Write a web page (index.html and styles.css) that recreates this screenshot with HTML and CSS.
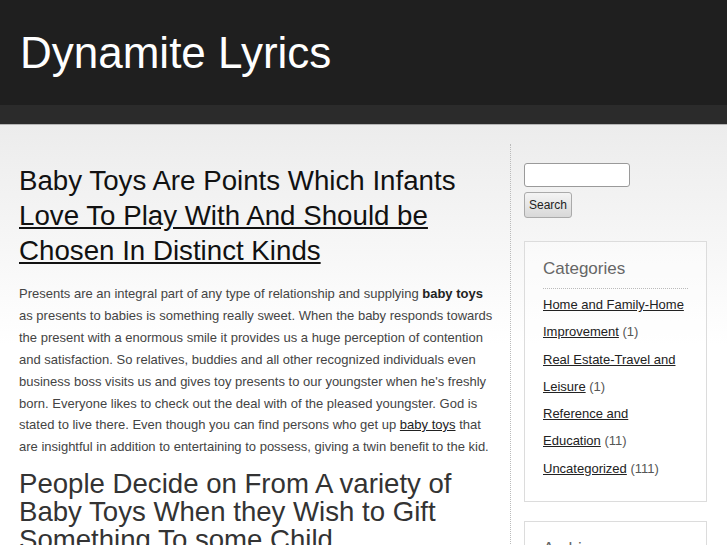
FILE: index.html
```html
<!DOCTYPE html>
<html lang="en">
<head>
    <meta charset="UTF-8">
    <title>Dynamite Lyrics</title>
    <link rel="stylesheet" href="styles.css">
</head>
<body>
    <header class="site-header">
        <h1 class="site-title">Dynamite Lyrics</h1>
    </header>
    <div class="nav-strip"></div>

    <div class="wrapper">
        <main class="content">
            <h2 class="post-title">Baby Toys Are Points Which Infants <a href="#">Love To Play With And Should be Chosen In Distinct Kinds</a></h2>
            <p class="post-text">Presents are an integral part of any type of relationship and supplying <strong>baby toys</strong> as presents to babies is something really sweet. When the baby responds towards the present with a enormous smile it provides us a huge perception of contention and satisfaction. So relatives, buddies and all other recognized individuals even business boss visits us and gives toy presents to our youngster when he's freshly born. Everyone likes to check out the deal with of the pleased youngster. God is stated to live there. Even though you can find persons who get up <a href="#">baby toys</a> that are insightful in addition to entertaining to possess, giving a twin benefit to the kid.</p>
            <h3 class="sub-title">People Decide on From A variety of Baby Toys When they Wish to Gift Something To some Child</h3>
        </main>

        <aside class="sidebar">
            <form class="search-form">
                <input type="text" class="search-input">
                <button type="button" class="search-btn">Search</button>
            </form>

            <div class="widget">
                <h4 class="widget-title">Categories</h4>
                <ul class="cat-list">
                    <li><a href="#">Home and Family-Home Improvement</a> (1)</li>
                    <li><a href="#">Real Estate-Travel and Leisure</a> (1)</li>
                    <li><a href="#">Reference and Education</a> (11)</li>
                    <li><a href="#">Uncategorized</a> (111)</li>
                </ul>
            </div>

            <div class="widget">
                <h4 class="widget-title">Archives</h4>
            </div>
        </aside>
    </div>
</body>
</html>
```

FILE: styles.css
```css
body {
    margin: 0;
    padding: 0;
    font-family: "Liberation Sans", Arial, sans-serif;
    color: #333;
    background: #fff linear-gradient(#ececec, #fff 220px) no-repeat;
    background-position: 0 125px;
}

.site-header {
    background-color: #1f1f1f;
    height: 105px;
    padding: 0 20px;
    box-sizing: border-box;
}

.site-title {
    margin: 0;
    padding-top: 26px;
    font-size: 44px;
    font-weight: normal;
    line-height: 54px;
    color: #fff;
}

.nav-strip {
    height: 19px;
    background-color: #2b2b2b;
    border-bottom: 1px solid #b5b5b5;
}

.wrapper {
    display: flex;
    margin: 19px 0 0 19px;
    width: 688px;
}

.content {
    width: 478px;
    margin-right: 13px;
}

.post-title {
    margin: 19px 0 15px;
    font-size: 27.7px;
    line-height: 35px;
    font-weight: normal;
    color: #111;
}

.post-title a {
    color: #111;
}

.post-text {
    margin: 0;
    font-size: 13px;
    line-height: 21.9px;
    color: #444;
}

.post-text strong {
    color: #222;
}

.post-text a {
    color: #222;
}

.sub-title {
    margin: 12px 0 0;
    font-size: 27.6px;
    line-height: 28px;
    font-weight: normal;
    color: #333;
}

.sidebar {
    flex: 1;
    border-left: 1px dotted #bbb;
    padding: 19px 0 0 13px;
    min-height: 420px;
}

.search-form {
    display: flex;
    flex-direction: column;
    align-items: flex-start;
    gap: 5px;
    margin-bottom: 23px;
}

.search-input {
    width: 106px;
    height: 24px;
    box-sizing: border-box;
    border: 1px solid #9a9a9a;
    border-radius: 3px;
    background: #fff;
}

.search-btn {
    height: 26px;
    width: 48px;
    padding: 0;
    font-family: "Liberation Sans", Arial, sans-serif;
    font-size: 12px;
    color: #222;
    border: 1px solid #aaa;
    border-radius: 3px;
    background: linear-gradient(#f4f4f4, #d8d8d8);
}

.widget {
    border: 1px solid #dcdcdc;
    background-color: rgba(255, 255, 255, 0.4);
    padding: 16px 18px 19px;
    margin-bottom: 19px;
}

.widget-title {
    margin: 0;
    padding-bottom: 8px;
    border-bottom: 1px dotted #bbb;
    font-size: 17px;
    line-height: 22px;
    font-weight: normal;
    color: #666;
}

.cat-list {
    list-style: none;
    margin: 2px 0 0;
    padding: 0;
    font-size: 13px;
    line-height: 27.3px;
    color: #555;
}

.cat-list a {
    color: #222;
}
```
